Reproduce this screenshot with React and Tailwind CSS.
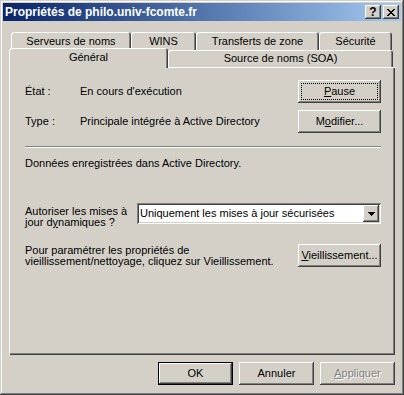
import React from 'react';

const raised =
  'shadow-[inset_-1px_-1px_#404040,inset_1px_1px_#fff,inset_-2px_-2px_#808080,inset_2px_2px_#d4d0c8]';

const Button = ({ children, className = '' }) => (
  <div className={`flex items-center justify-center bg-[#d4d0c8] ${raised} ${className}`}>
    {children}
  </div>
);

const Tab = ({ children, className = '' }) => (
  <div
    className={`flex items-center justify-center bg-[#d4d0c8] rounded-t-[3px] shadow-[inset_1px_1px_#fff,inset_-1px_0_#404040,inset_-2px_0_#808080] ${className}`}
  >
    {children}
  </div>
);

const App = () => {
  return (
    <div className="w-[404px] h-[395px] bg-[#d4d0c8] p-[3px] flex flex-col text-[11px] leading-[13px] text-black font-['Liberation_Sans',Arial,sans-serif] shadow-[inset_-1px_-1px_#404040,inset_1px_1px_#d4d0c8,inset_-2px_-2px_#808080,inset_2px_2px_#fff] select-none">
      {/* Title bar */}
      <div className="h-[18px] flex items-center bg-linear-to-r from-[#0a246a] to-[#a6caf0] pl-[2px] pr-[2px]">
        <span className="text-white font-bold text-[12px]">Propriétés de philo.univ-fcomte.fr</span>
        <div className="ml-auto flex gap-[2px]">
          <Button className="w-[16px] h-[14px] font-bold text-[12px] leading-none">?</Button>
          <Button className="w-[16px] h-[14px]">
            <svg width="8" height="7" viewBox="0 0 8 7" shapeRendering="crispEdges">
              <path d="M0 0h2v1H0zM6 0h2v1H6zM1 1h2v1H1zM5 1h2v1H5zM2 2h4v1H2zM3 3h2v1H3zM2 4h4v1H2zM1 5h2v1H1zM5 5h2v1H5zM0 6h2v1H0zM6 6h2v1H6z" fill="#000" />
            </svg>
          </Button>
        </div>
      </div>

      <div className="flex-1 flex flex-col px-[6px] pt-[11px]">
        {/* Back row of tabs */}
        <div className="flex h-[18px] pl-[2px]">
          <Tab className="w-[120px] h-[18px]">Serveurs de noms</Tab>
          <Tab className="w-[65px] h-[18px]">WINS</Tab>
          <Tab className="w-[123px] h-[18px]">Transferts de zone</Tab>
          <Tab className="w-[73px] h-[18px]">Sécurité</Tab>
        </div>
        {/* Front row of tabs */}
        <div className="flex h-[17px] relative z-10">
          <Tab className="w-[159px] h-[20px] -mt-[2px] pb-[1px]">Général</Tab>
          <Tab className="w-[225px] h-[17px]">Source de noms (SOA)</Tab>
        </div>

        {/* Panel */}
        <div className="h-[288px] flex flex-col pl-[16px] pr-[14px] pt-[13px] shadow-[inset_1px_1px_#fff,inset_-1px_-1px_#404040,inset_-2px_-2px_#808080]">
          <div className="flex items-center">
            <span className="w-[55px]">État :</span>
            <span>En cours d'exécution</span>
            <Button className="ml-auto w-[83px] h-[23px] outline-1 outline-dotted outline-black -outline-offset-4">
              <span>
                <span className="underline">P</span>ause
              </span>
            </Button>
          </div>
          <div className="flex items-center mt-[7px]">
            <span className="w-[55px]">Type :</span>
            <span>Principale intégrée à Active Directory</span>
            <Button className="ml-auto w-[83px] h-[23px]">
              <span>
                M<span className="underline">o</span>difier...
              </span>
            </Button>
          </div>

          <div className="mt-[13px] h-[2px] border-t border-[#808080] border-b border-b-white" />

          <p className="mt-[9px]">Données enregistrées dans Active Directory.</p>

          <div className="flex items-start mt-[33px]">
            <p className="w-[112px] mt-[3px] leading-[11px]">
              Autoriser les mises à
              <br />
              jour d<span className="underline">y</span>namiques ?
            </p>
            <div className="w-[244px] h-[21px] bg-white flex items-center pl-[3px] pr-[2px] shadow-[inset_1px_1px_#808080,inset_-1px_-1px_#fff,inset_2px_2px_#404040,inset_-2px_-2px_#d4d0c8]">
              <span>Uniquement les mises à jour sécurisées</span>
              <Button className="ml-auto w-[16px] h-[17px]">
                <svg width="7" height="4" viewBox="0 0 7 4" shapeRendering="crispEdges">
                  <path d="M0 0h7v1H0zM1 1h5v1H1zM2 2h3v1H2zM3 3h1v1H3z" fill="#000" />
                </svg>
              </Button>
            </div>
          </div>

          <div className="flex items-start mt-[16px]">
            <p className="leading-[11px] mt-[1px]">
              Pour paramétrer les propriétés de
              <br />
              vieillissement/nettoyage, cliquez sur Vieillissement.
            </p>
            <Button className="ml-auto w-[83px] h-[23px]">
              <span>
                <span className="underline">V</span>ieillissement...
              </span>
            </Button>
          </div>
        </div>

        {/* Dialog buttons */}
        <div className="flex justify-end gap-[6px] mt-[7px]">
          <Button className="w-[75px] h-[23px] border border-black">OK</Button>
          <Button className="w-[75px] h-[23px]">Annuler</Button>
          <Button className="w-[75px] h-[23px] text-[#808080] [text-shadow:1px_1px_0_#fff]">
            <span>
              <span className="underline">A</span>ppliquer
            </span>
          </Button>
        </div>
      </div>
    </div>
  );
};

export default App;
